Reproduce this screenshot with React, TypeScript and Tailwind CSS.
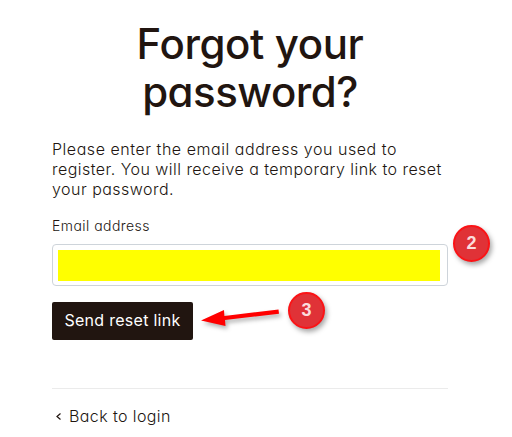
import React from 'react'

function StepBadge({ step }: { step: number }) {
  return (
    <div className="flex size-[37px] items-center justify-center rounded-full border-2 border-[#fb1316] bg-[#e03237] pb-px text-[18px] leading-none font-bold text-[#fbdcdc] shadow-[2px_3px_5px_rgba(0,0,0,0.35)] font-['Liberation_Sans',sans-serif]">
      {step}
    </div>
  )
}

function Arrow() {
  return (
    <svg width="90" height="32" viewBox="0 0 90 32" className="drop-shadow-[2px_3px_2px_rgba(0,0,0,0.3)]">
      <path d="M5 22.500 28 12 28.400 18 82.500 11.500 83 15.700 29 22 29.500 28Z" fill="#ff0000" />
    </svg>
  )
}

export default function App() {
  return (
    <div className="relative h-[437px] w-[512px] overflow-hidden bg-white pl-[52px] pt-5 text-[#211510] font-['Inter',sans-serif] [font-feature-settings:'cv11']">
      <div className="w-[396px]">
        <h1 className="text-center text-[42px] leading-[48px] font-medium whitespace-nowrap">
          <span className="block tracking-[-0.4px]">Forgot your</span>
          <span className="block tracking-[-0.5px]">password?</span>
        </h1>

        <p className="mt-[23px] text-[16px] leading-5 font-light whitespace-nowrap">
          <span className="block tracking-[0.54px]">Please enter the email address you used to</span>
          <span className="block tracking-[0.46px]">register. You will receive a temporary link to reset</span>
          <span className="block tracking-[0.48px]">your password.</span>
        </p>

        <form onSubmit={(e) => e.preventDefault()}>
          <label htmlFor="email" className="mt-[17px] block text-[14px] leading-5 font-light tracking-[0.45px]">
            Email address
          </label>
          <div className="mt-2 h-[42px] rounded-[4px] border border-[#ced4da] p-[5px]">
            <input id="email" type="email" className="block h-[31px] w-[382px] bg-[#ffff00] outline-none" />
          </div>
          <button type="submit" className="mt-4 block h-[38px] w-[141px] rounded-[2px] bg-[#211510] pb-0.5 text-[16px] leading-5 tracking-[0.28px] whitespace-nowrap text-white">
            Send reset link
          </button>
        </form>

        <div className="mt-12 flex border-t border-[#ebebeb] pt-[17px] text-[16px] leading-5 font-light tracking-[0.4px]">
          <svg width="17" height="20" viewBox="0 0 17 20" fill="none" stroke="#211510" strokeWidth="1.2">
            <path d="M8.500 7.500 5 10.500l3.500 3" />
          </svg>
          <a href="#login">Back to login</a>
        </div>
      </div>

      {/* Step markers over the form */}
      <div className="absolute left-[453px] top-[225px]"><StepBadge step={2} /></div>
      <div className="absolute left-[288px] top-[292px]"><StepBadge step={3} /></div>
      <div className="absolute left-[196px] top-[298px]"><Arrow /></div>
    </div>
  )
}
